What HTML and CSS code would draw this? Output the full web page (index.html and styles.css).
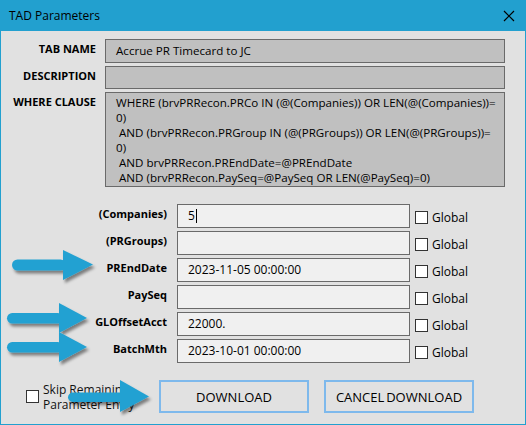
FILE: index.html
```html
<!DOCTYPE html>
<html lang="en">

<head>
    <meta charset="UTF-8">
    <title>TAD Parameters</title>
    <link rel="stylesheet" href="styles.css">
</head>

<body>

    <div class="window">
        <div class="titlebar">
            <span class="title">TAD Parameters</span>
            <svg class="close" width="12" height="12" viewBox="0 0 12 12">
                <path d="M1 1 L11 11 M11 1 L1 11" stroke="#000" stroke-width="1.2" fill="none"/>
            </svg>
        </div>

        <div class="content">
            <div class="info">
                <div class="info_label">TAB NAME</div>
                <div class="info_box tab_box">Accrue PR Timecard to JC</div>

                <div class="info_label">DESCRIPTION</div>
                <div class="info_box desc_box"></div>

                <div class="info_label">WHERE CLAUSE</div>
                <div class="info_box where_box">WHERE (brvPRRecon.PRCo IN (@(Companies)) OR LEN(@(Companies))=<br>0)<br>&nbsp;AND (brvPRRecon.PRGroup IN (@(PRGroups)) OR LEN(@(PRGroups))=<br>0)<br>&nbsp;AND brvPRRecon.PREndDate=@PREndDate<br>&nbsp;AND (brvPRRecon.PaySeq=@PaySeq OR LEN(@PaySeq)=0)</div>
            </div>

            <div class="params">
                <div class="param_label">(Companies)</div>
                <div class="param_input">5<span class="caret"></span></div>
                <label class="global"><span class="check"></span>Global</label>

                <div class="param_label">(PRGroups)</div>
                <div class="param_input"></div>
                <label class="global"><span class="check"></span>Global</label>

                <div class="param_label">PREndDate</div>
                <div class="param_input">2023-11-05 00:00:00</div>
                <label class="global"><span class="check"></span>Global</label>

                <div class="param_label">PaySeq</div>
                <div class="param_input"></div>
                <label class="global"><span class="check"></span>Global</label>

                <div class="param_label">GLOffsetAcct</div>
                <div class="param_input">22000.</div>
                <label class="global"><span class="check"></span>Global</label>

                <div class="param_label">BatchMth</div>
                <div class="param_input">2023-10-01 00:00:00</div>
                <label class="global"><span class="check"></span>Global</label>
            </div>

            <div class="footer">
                <label class="skip"><span class="check"></span><span>Skip Remaining<br>Parameter Entry</span></label>
                <div class="button">DOWNLOAD</div>
                <div class="button">CANCEL DOWNLOAD</div>
            </div>
        </div>

        <svg class="arrows" width="526" height="425" viewBox="0 0 526 425">
            <defs>
                <filter id="shadow" x="-20%" y="-30%" width="150%" height="180%">
                    <feDropShadow dx="2" dy="3" stdDeviation="1.8" flood-color="#000" flood-opacity="0.45"/>
                </filter>
            </defs>
            <g fill="#22a1d2" filter="url(#shadow)">
                <!-- PREndDate -->
                <rect x="12" y="259.5" width="54" height="11" rx="5.5"/>
                <polygon points="63,250 93,264.5 63,280"/>
                <!-- GLOffsetAcct -->
                <rect x="7" y="313" width="56" height="10.5" rx="5.2"/>
                <polygon points="59,303 87,318 59,333"/>
                <!-- BatchMth -->
                <rect x="7" y="342" width="56" height="10.5" rx="5.2"/>
                <polygon points="59,332 87,347 59,362"/>
                <!-- DOWNLOAD -->
                <rect x="68" y="392.5" width="56" height="9.5" rx="4.7"/>
                <polygon points="120,380 149,396.5 120,412"/>
            </g>
        </svg>
    </div>

</body>

</html>
```

FILE: styles.css
```css
*{
    padding: 0px;
    margin: 0px;
    box-sizing: border-box;
}

body{
    width: 526px;
    height: 425px;
    font-family: "Open Sans", "Noto Sans", sans-serif;
    font-size: 12px;
    color: #000;
}

.window{
    position: relative;
    width: 526px;
    height: 425px;
    background-color: #22a0cf;
    display: flex;
    flex-direction: column;
}

.titlebar{
    height: 31px;
    display: flex;
    align-items: center;
    justify-content: space-between;
    padding: 0px 10px 0px 9px;
}

.title{
    font-size: 12px;
    color: #000;
}

.close{
    margin-right: 1px;
}

.content{
    flex: 1;
    margin: 0px 1px 1px 1px;
    background-color: #e1e1e1;
    display: flex;
    flex-direction: column;
}

/* top info block */
.info{
    display: grid;
    grid-template-columns: 95px 400px;
    column-gap: 9px;
    padding-top: 8px;
}

.info_label{
    font-size: 11px;
    font-weight: bold;
    text-align: right;
    padding-top: 2px;
    line-height: 15px;
}

.info_box{
    background-color: #c0c0c0;
    border: 1px solid #6a6a6a;
    padding: 0px 10px;
    font-size: 11.6px;
}

.tab_box{
    height: 24px;
    line-height: 22px;
    margin-bottom: 3px;
}

.desc_box{
    height: 23px;
    margin-bottom: 3px;
}

.where_box{
    height: 95px;
    line-height: 15px;
    padding-top: 2px;
    white-space: nowrap;
}

/* parameter rows */
.params{
    display: grid;
    grid-template-columns: 166px 233px auto;
    column-gap: 10px;
    row-gap: 3px;
    margin-top: 17px;
}

.param_label{
    font-size: 11px;
    font-weight: bold;
    text-align: right;
    line-height: 15px;
    padding-top: 2px;
}

.param_input{
    height: 24px;
    line-height: 22px;
    background-color: #f0f0f0;
    border: 1px solid #6a6a6a;
    padding: 0px 10px;
    display: flex;
    align-items: center;
}

.caret{
    display: inline-block;
    width: 1px;
    height: 14px;
    background-color: #000;
    margin-left: 1px;
}

.global{
    display: flex;
    align-items: center;
    gap: 4px;
    margin-left: -5px;
    padding-top: 2px;
}

.check{
    display: inline-block;
    width: 13px;
    height: 13px;
    background-color: #fff;
    border: 1px solid #333;
    flex-shrink: 0;
}

/* footer */
.footer{
    display: flex;
    align-items: center;
    margin-top: 17px;
    height: 33px;
}

.skip{
    display: flex;
    align-items: center;
    gap: 4px;
    width: 158px;
    padding-left: 25px;
    line-height: 15px;
    color: #111;
}

.button{
    width: 150px;
    height: 33px;
    border: 2px solid #7eb9ec;
    display: flex;
    align-items: center;
    justify-content: center;
    font-size: 13px;
    margin-right: 15px;
    word-spacing: -1.5px;
}

.arrows{
    position: absolute;
    top: 0px;
    left: 0px;
    pointer-events: none;
}
```
